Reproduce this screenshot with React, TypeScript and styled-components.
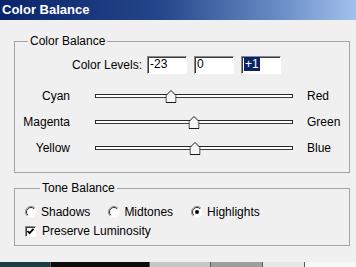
import styled, { createGlobalStyle } from "styled-components";

const GlobalStyle = createGlobalStyle`
  html, body {
    margin: 0;
    padding: 0;
    background: #f0f0f0;
  }
  body {
    font-family: "Liberation Sans", Arial, sans-serif;
    font-size: 12px;
    color: #000;
  }
`;

const LEVELS = ["-23", "0", "+1"];

const SLIDERS = [
  { left: "Cyan", right: "Red", value: -23 },
  { left: "Magenta", right: "Green", value: 0 },
  { left: "Yellow", right: "Blue", value: 1 },
];

const TONES = [
  { label: "Shadows", checked: false },
  { label: "Midtones", checked: false },
  { label: "Highlights", checked: true },
];

const TASKBAR = [
  { width: 50, color: "#1c3c44" },
  { width: 98, color: "#0c0c0c" },
  { width: 60, color: "#c6c6c6" },
  { width: 51, color: "#9e9e9e" },
  { width: 41, color: "#e6e6e6" },
  { width: 56, color: "#f8f8f8" },
];

function Thumb() {
  return (
    <ThumbSvg width="11" height="13" viewBox="0 0 11 13">
      <path
        d="M5.5 0.5 L10.5 5.5 L10.5 12.5 L0.5 12.5 L0.5 5.5 Z"
        fill="#f6f6f6"
        stroke="#1a1a1a"
      />
    </ThumbSvg>
  );
}

function Radio({ checked }: { checked: boolean }) {
  return (
    <svg width="12" height="12" viewBox="0 0 12 12">
      <circle cx="6" cy="6" r="5.5" fill="#fff" />
      <path d="M2.1 9.9 A5.5 5.5 0 0 1 9.9 2.1" fill="none" stroke="#8a8a8a" />
      <path d="M2.8 9.2 A4.5 4.5 0 0 1 9.2 2.8" fill="none" stroke="#303030" />
      {checked && <circle cx="6" cy="6" r="2" fill="#000" />}
    </svg>
  );
}

function App() {
  return (
    <>
      <GlobalStyle />
      <Window>
        <TitleBar>Color Balance</TitleBar>
        <Body>
          <Group>
            <Legend $offset={13}>Color Balance</Legend>
            <LevelsRow>
              <LevelsLabel>Color Levels:</LevelsLabel>
              {LEVELS.map((v, i) => (
                <Field key={i}>
                  {i === LEVELS.length - 1 ? <Selected>{v}</Selected> : v}
                </Field>
              ))}
            </LevelsRow>
            <Sliders>
              {SLIDERS.map((s) => (
                <SliderRow key={s.left}>
                  <SideLabel $align="right">{s.left}</SideLabel>
                  <Track>
                    <ThumbHolder style={{ left: `${(s.value + 100) / 2}%` }}>
                      <Thumb />
                    </ThumbHolder>
                  </Track>
                  <SideLabel $align="left">{s.right}</SideLabel>
                </SliderRow>
              ))}
            </Sliders>
          </Group>
          <ToneGroup>
            <Legend $offset={15}>Tone Balance</Legend>
            <RadioRow>
              {TONES.map((t) => (
                <Option key={t.label}>
                  <Radio checked={t.checked} />
                  <span>{t.label}</span>
                </Option>
              ))}
            </RadioRow>
            <CheckRow>
              <CheckBox>
                <svg width="9" height="9" viewBox="0 0 9 9">
                  <path d="M1.5 4 L3.5 6.2 L7.5 1.8" fill="none" stroke="#000" strokeWidth="1.8" />
                </svg>
              </CheckBox>
              <span>Preserve Luminosity</span>
            </CheckRow>
          </ToneGroup>
        </Body>
        <Taskbar>
          {TASKBAR.map((seg, i) => (
            <TaskSegment key={i} $width={seg.width} $color={seg.color} />
          ))}
        </Taskbar>
      </Window>
    </>
  );
}

const Window = styled.div`
  display: flex;
  flex-direction: column;
  width: 356px;
  height: 267px;
  background: #f0f0f0;
  overflow: hidden;
`;

const TitleBar = styled.div`
  height: 20px;
  padding-left: 2px;
  line-height: 20px;
  font-size: 13px;
  font-weight: bold;
  color: #fff;
  background: linear-gradient(90deg, #0a246a 0%, #25468a 45%, #6d90c8 80%, #a2c2ec 100%);
`;

const Body = styled.div`
  display: flex;
  flex-direction: column;
  padding: 14px 6px 0 14px;
`;

const Group = styled.fieldset`
  margin: 0;
  padding: 0 0 11px 0;
  min-width: 0;
  border: 1px solid #a4a4a4;
`;

const ToneGroup = styled(Group)`
  margin-top: 8px;
  padding: 0 0 7px 10px;
`;

const Legend = styled.legend<{ $offset: number }>`
  margin-left: ${({ $offset }) => $offset}px;
  padding: 0 2px;
  line-height: 14px;
`;

const LevelsRow = styled.div`
  display: flex;
  align-items: center;
  gap: 7px;
  margin-top: 8px;
`;

const LevelsLabel = styled.span`
  width: 127px;
  margin-right: -2px;
  text-align: right;
`;

const Field = styled.div`
  box-sizing: border-box;
  width: 40px;
  height: 18px;
  padding-left: 2px;
  line-height: 15px;
  background: #fff;
  border-top: 1px solid #8a8a8a;
  border-left: 1px solid #8a8a8a;
  border-bottom: 1px solid #fff;
  border-right: 1px solid #fff;
  box-shadow: inset 1px 1px 0 #3a3a3a;
`;

const Selected = styled.span`
  display: inline-block;
  padding: 0 1px;
  line-height: 14px;
  background: #0a246a;
  color: #fff;
`;

const Sliders = styled.div`
  display: flex;
  flex-direction: column;
  margin-top: 9px;
`;

const SliderRow = styled.div`
  display: grid;
  grid-template-columns: 55px 198px auto;
  column-gap: 25px;
  align-items: center;
  height: 26px;
  & > span:last-child {
    margin-left: -11px;
  }
`;

const SideLabel = styled.span<{ $align: "left" | "right" }>`
  text-align: ${({ $align }) => $align};
  line-height: 14px;
`;

const Track = styled.div`
  position: relative;
  box-sizing: border-box;
  height: 4px;
  background: #fff;
  border: 1px solid #262626;
  border-bottom-color: #3c3c3c;
`;

const ThumbHolder = styled.div`
  position: absolute;
  top: -5px;
  transform: translateX(-50%);
  line-height: 0;
`;

const ThumbSvg = styled.svg`
  display: block;
`;

const RadioRow = styled.div`
  display: flex;
  align-items: center;
  gap: 18px;
  height: 14px;
  margin-top: 10px;
`;

const Option = styled.label`
  display: flex;
  align-items: center;
  gap: 4px;
  line-height: 14px;
`;

const CheckRow = styled.label`
  display: flex;
  align-items: center;
  gap: 6px;
  height: 14px;
  margin-top: 5px;
  line-height: 14px;
`;

const CheckBox = styled.span`
  box-sizing: border-box;
  display: flex;
  align-items: center;
  justify-content: center;
  width: 11px;
  height: 11px;
  background: #fff;
  border-top: 1px solid #8a8a8a;
  border-left: 1px solid #8a8a8a;
  border-bottom: 1px solid #fff;
  border-right: 1px solid #fff;
  box-shadow: inset 1px 1px 0 #3a3a3a;
`;

const Taskbar = styled.div`
  display: flex;
  margin-top: auto;
  height: 5px;
`;

const TaskSegment = styled.div<{ $width: number; $color: string }>`
  width: ${({ $width }) => $width}px;
  flex-shrink: 0;
  background: ${({ $color }) => $color};
  border-right: 1px solid #5a5a5a;
`;

export default App;
